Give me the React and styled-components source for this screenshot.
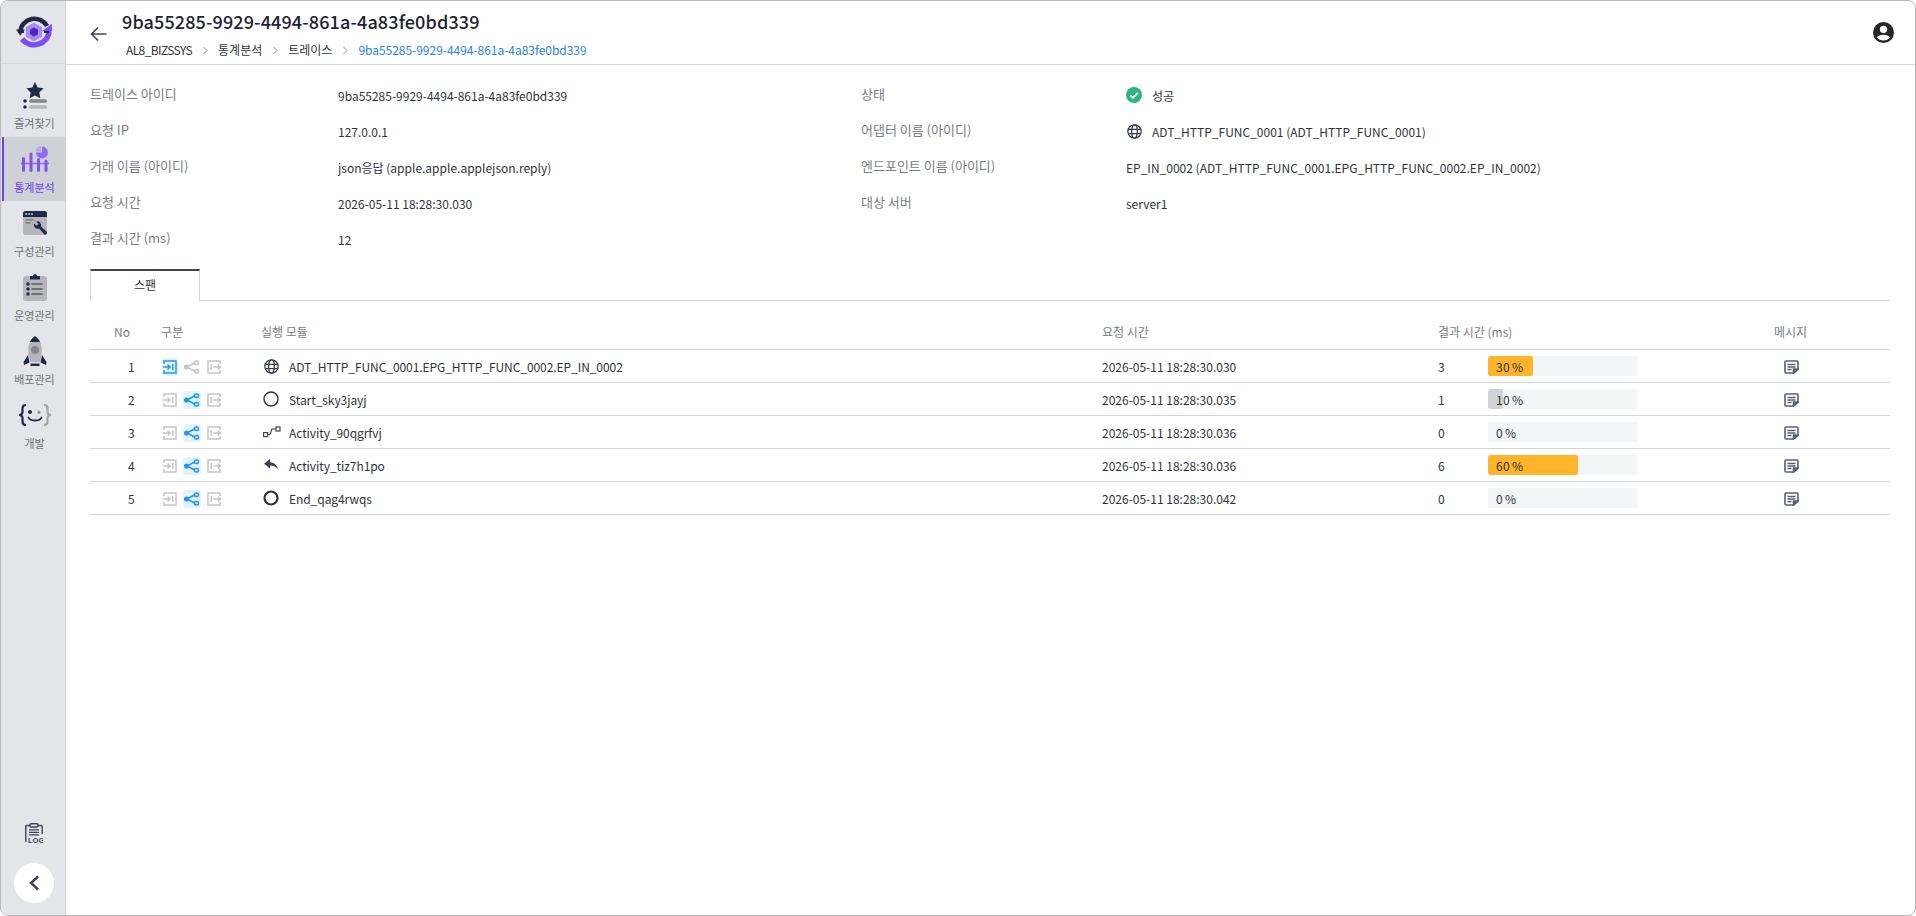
import React from "react";
import styled, { createGlobalStyle } from "styled-components";

const Global = createGlobalStyle`
  html, body { margin: 0; padding: 0; height: 100%; background: #fff; }
  body { font-family: "Noto Sans CJK KR", "Noto Sans", sans-serif; color: #2b2f38; }
  * { box-sizing: border-box; }
`;

const Frame = styled.div`
  width: 1916px; height: 916px; display: flex; overflow: hidden;
  border: 1px solid #b9b9bb; border-radius: 8px; background: #fff;
`;
const Sidebar = styled.nav`
  width: 65px; flex: none; background: #e4e5ea; display: flex; flex-direction: column;
  border-right: 1px solid #d3d4d8;
`;
const LogoBox = styled.div`
  height: 63px; flex: none; display: flex; align-items: center; justify-content: center;
  border-bottom: 1px solid #d3d4d8; margin-right: -1px;
`;
const NavList = styled.div`
  padding-top: 9px; display: flex; flex-direction: column; flex: 1;
`;
const NavItem = styled.div`
  height: 64px; display: flex; flex-direction: column; align-items: center;
  padding-top: 4px; font-size: 11px; line-height: 16px; margin-left: 1px;
  color: ${p => (p.$active ? "#6b3ff0" : "#6d7078")};
  background: ${p => (p.$active ? "#d0d1d6" : "transparent")};
  border-left: 2px solid ${p => (p.$active ? "#6b3ff0" : "transparent")};
`;
const NavIcon = styled.div`
  height: 36px; margin-bottom: 2px; flex: none; display: flex; align-items: center; justify-content: center;
`;
const SideBottom = styled.div`
  margin-top: auto; display: flex; flex-direction: column; align-items: center; padding: 0 0 12px 1px; gap: 19px;
`;
const CollapseBtn = styled.button`
  width: 40px; height: 40px; border-radius: 50%; border: 0; background: #fff; padding: 0;
  display: flex; align-items: center; justify-content: center;
`;
const Main = styled.main`
  flex: 1; min-width: 0; display: flex; flex-direction: column;
`;
const Header = styled.header`
  height: 64px; flex: none; border-bottom: 1px solid #d3d4d8; display: flex; align-items: center;
  padding: 0 21px 0 23px;
`;
const BackBtn = styled.div`
  width: 18px; height: 16px; display: flex; margin-right: 15px; margin-top: 2px;
`;
const TitleBlock = styled.div`
  flex: 1; display: flex; flex-direction: column; align-self: flex-start; padding-top: 7px;
`;
const Title = styled.h1`
  margin: 0; font-size: 18px; line-height: 26px; font-weight: 500; color: #1d2330; letter-spacing: .13px;
`;
const Crumbs = styled.div`
  display: flex; align-items: center; font-size: 12px; line-height: 18px; margin-top: 7px; padding-left: 4px; color: #2f333b;
`;
const CrumbRoot = styled.span`
  letter-spacing: -.6px;
`;
const CrumbSep = styled.span`
  display: flex; width: 26px; justify-content: center; color: #8a8d93;
`;
const CrumbCur = styled.span`
  color: #2684e8; letter-spacing: -.03px;
`;
const Content = styled.div`
  padding: 12px 25px 0 24px;
`;
const Info = styled.div`
  display: grid; grid-template-columns: 771px 1fr; height: 192px;
`;
const InfoCol = styled.div`
  display: flex; flex-direction: column;
`;
const InfoRow = styled.div`
  height: 36px; display: flex; align-items: center; font-size: 12px;
`;
const InfoLabel = styled.div`
  width: ${p => p.$w || 248}px; flex: none; color: #7a7d84; font-size: 13px; margin-top: -3px;
`;
const InfoValue = styled.div`
  display: flex; align-items: center; gap: 10px; color: #2f333b;
`;
const StatusIcon = styled.span`
  width: 16px; height: 16px; display: flex; align-items: center; justify-content: center;
`;
const Tabs = styled.div`
  display: flex; border-bottom: 1px solid #d3d4d8; height: 32px;
`;
const Tab = styled.div`
  width: 110px; height: 32px; background: #fff; border: 1px solid #d3d4d8; border-top: 2px solid #3e4656; border-bottom: 0;
  display: flex; align-items: center; justify-content: center; font-size: 12px; color: #2f333b; padding-bottom: 3px;
`;
const Table = styled.div`
  margin-top: 13px; display: flex; flex-direction: column;
`;
const Row = styled.div`
  display: grid; grid-template-columns: 71px 100px 841px 336px 336px 1fr; height: 33px; align-items: center;
  border-bottom: 1px solid #d3d4d8; font-size: 12px; color: #2f333b;
`;
const HeadRow = styled(Row)`
  height: 36px; color: #7a7d84;
`;
const NoHead = styled.div` padding-left: 24px; `;
const NoCell = styled.div` padding-left: 38px; `;
const TypeCell = styled.div`
  display: flex; align-items: center; margin: 1px 0 0 1px;
`;
const TypeIcon = styled.div`
  width: ${p => p.$w}px; height: 18px; display: flex; align-items: center; justify-content: center; border-radius: 3px;
  background: ${p => (p.$on ? "#e3f2fd" : "transparent")};
  margin-right: ${p => p.$mr || 0}px;
`;
const ModuleCell = styled.div`
  display: flex; align-items: center; gap: 8px; letter-spacing: -.07px;
`;
const ModIcon = styled.div`
  width: 20px; height: 18px; display: flex; align-items: center; justify-content: center;
`;
const ResultCell = styled.div`
  display: flex; align-items: center;
`;
const ResultNum = styled.div` width: 50px; `;
const Bar = styled.div`
  width: 150px; height: 20px; background: #f4f5f7; border-radius: 2px; position: relative;
  display: flex; align-items: center; padding-left: 8px; overflow: hidden;
`;
const BarFill = styled.div`
  position: absolute; left: 0; top: 0; bottom: 0; border-radius: 2px;
  background: ${p => p.$c};
`;
const BarText = styled.span`
  position: relative; letter-spacing: .3px; word-spacing: -1px;
`;
const MsgCell = styled.div`
  width: 34px; display: flex; justify-content: center; margin-top: 1px;
`;

const Star = () => (
  <svg width="24" height="27" viewBox="0 0 24 27">
    <path d="M12 0l2.700 5.400 5.900.9-4.300 4.100 1 5.800L12 13.400 6.700 16.200l1-5.800L3.400 6.300l5.900-.9z" fill="#1f2a44"/>
    <circle cx="2" cy="19" r="1.800" fill="#1f2a44"/>
    <rect x="6" y="17.200" width="18" height="3.600" rx="1.800" fill="#85878f"/>
    <circle cx="2" cy="25" r="1.800" fill="#1f2a44"/>
    <rect x="6" y="23.200" width="18" height="3.600" rx="1.800" fill="#b4b6bc"/>
  </svg>
);
const Stats = () => (
  <svg width="30" height="27" viewBox="0 0 30 27">
    <path d="M22 6.500h-6a6 6 0 1 0 6-6z" fill="#8f6cf5"/>
    <path d="M21 5.500V0a6 6 0 0 0-5.500 5.500z" fill="#b9a4fa"/>
    <path d="M1 17.500h28" stroke="#8f6cf5" strokeWidth="1.400"/>
    <g fill="#7c55f2">
      <rect x="2" y="11" width="3" height="15" rx="1.500"/>
      <rect x="9.500" y="6.500" width="3" height="19.500" rx="1.500"/>
      <rect x="17" y="12" width="3" height="14" rx="1.500"/>
      <rect x="24.500" y="13.500" width="3" height="12.500" rx="1.500"/>
    </g>
  </svg>
);
const Config = () => (
  <svg width="24" height="25" viewBox="0 0 24 25">
    <rect x="0" y="0" width="24" height="24" rx="2.500" fill="#b4b6bc"/>
    <path d="M0 2.500A2.500 2.500 0 0 1 2.500 0h19A2.500 2.500 0 0 1 24 2.500V6H0z" fill="#1f2a44"/>
    <circle cx="3" cy="3" r=".9" fill="#d9dade"/><circle cx="6" cy="3" r=".9" fill="#d9dade"/><circle cx="9" cy="3" r=".9" fill="#d9dade"/>
    <rect x="2.500" y="8" width="8" height="1.600" fill="#7d8089"/><rect x="2.500" y="11" width="5" height="1.600" fill="#7d8089"/>
    <path d="M11 12.500a4 4 0 0 0 5 5l5 5.500a1.700 1.700 0 0 0 2.500-2.400L18 15.500a4 4 0 0 0-5-5l2.500 2.300-1.800 2z" fill="#1f2a44"/>
  </svg>
);
const Ops = () => (
  <svg width="24" height="28" viewBox="0 0 24 28">
    <rect x="0" y="3" width="24" height="25" rx="3" fill="#b4b6bc"/>
    <path d="M7 3h3a2 2 0 0 1 4 0h3v3.500H7z" fill="#1f2a44"/>
    <g fill="#1f2a44"><circle cx="5" cy="11" r="1.700"/><circle cx="5" cy="16" r="1.700"/><circle cx="5" cy="21" r="1.700"/></g>
    <g fill="#6d7078"><rect x="8.500" y="10" width="11" height="2"/><rect x="8.500" y="15" width="11" height="2"/><rect x="8.500" y="20" width="11" height="2"/></g>
  </svg>
);
const Rocket = () => (
  <svg width="24" height="30" viewBox="0 0 24 30">
    <path d="M12 0C9.800 1.500 7.800 3.500 7 6h10C16.200 3.500 14.200 1.500 12 0z" fill="#1f2a44"/>
    <path d="M7 6h10c1.200 2.200 1.800 5 1.800 8 0 4-.8 8-1.800 12H7C6 22 5.200 18 5.200 14c0-3 .6-5.800 1.800-8z" fill="#b4b6bc"/>
    <circle cx="12" cy="14" r="4" fill="#85878f"/>
    <path d="M5 19L.5 26l.5 3 5.500-2.500zM19 19l4.500 7-.5 3-5.500-2.500z" fill="#1f2a44"/>
    <rect x="7.500" y="27.500" width="9" height="2.500" fill="#1f2a44"/>
  </svg>
);
const Dev = () => (
  <svg width="32" height="22" viewBox="0 0 32 22">
    <path d="M7 1C4 1 3.500 2.500 3.500 4.500v3.500c0 1.800-1 2.500-2.500 3 1.500.5 2.500 1.200 2.500 3v3.500c0 2 .5 3.500 3.500 3.500" fill="none" stroke="#1f2a44" strokeWidth="2.200"/>
    <path d="M25 1c3 0 3.500 1.500 3.500 3.500v3.500c0 1.800 1 2.500 2.500 3-1.500.5-2.500 1.200-2.500 3v3.500c0 2-.5 3.500-3.500 3.500" fill="none" stroke="#a3a5ab" strokeWidth="2.200"/>
    <circle cx="11" cy="8" r="2" fill="#1f2a44"/>
    <path d="M20 6l.7 1.400 1.500.2-1.100 1 .3 1.500-1.400-.7-1.400.7.300-1.500-1.100-1 1.500-.2z" fill="#85878f"/>
    <path d="M9.500 13.500c1.500 4 11.500 4 13 0" fill="none" stroke="#1f2a44" strokeWidth="1.800" strokeLinecap="round"/>
  </svg>
);
const Logo = () => (
  <svg width="36" height="32" viewBox="0 0 36 32">
    <path d="M4.500 15A14 13 0 0 1 31 10" fill="none" stroke="#1f2a44" strokeWidth="4.500"/>
    <path d="M0 13.500h9L4 19.500z" fill="#1f2a44" />
    <path d="M33 15A15 14.500 0 0 1 6 23" fill="none" stroke="#7c4df5" strokeWidth="5.500"/>
    <path d="M26 15h10l-.2-7z" fill="#7c4df5"/>
    <path d="M3 16h5M28 16h5" stroke="#1f2a44" strokeWidth="2"/>
    <path d="M18 6.500l8.200 4.700v9.600L18 25.500l-8.200-4.700v-9.600z" fill="#a98cf8"/>
    <path d="M18 11.500l3.900 2.300v4.500L18 20.500l-3.900-2.200v-4.500z" fill="#4a22c8"/>
  </svg>
);
const LogIcon = () => (
  <svg width="18" height="21" viewBox="0 0 18 21">
    <path d="M.8 19V3.500a1 1 0 0 1 1-1H5M13 2.500h3.200a1 1 0 0 1 1 1V11" fill="none" stroke="#3c4356" strokeWidth="1.400"/>
    <rect x="5" y=".7" width="8" height="3.300" rx="1" fill="none" stroke="#3c4356" strokeWidth="1.400"/>
    <path d="M4 6.800h10M4 9.300h10M4 11.800h10" stroke="#3c4356" strokeWidth="1.300"/>
    <text x="3" y="19.500" fontSize="7.500" fontWeight="700" fontFamily="Liberation Sans" fill="#3c4356">LOG</text>
  </svg>
);
const Chevron = () => (
  <svg width="12" height="18" viewBox="0 0 12 18"><path d="M10 2.500L3 9l7 6.500" fill="none" stroke="#3c4356" strokeWidth="2.400"/></svg>
);
const Back = () => (
  <svg width="18" height="16" viewBox="0 0 18 16"><path d="M17.500 8H2.500M9 1.500L2.500 8 9 14.500" fill="none" stroke="#3c4356" strokeWidth="1.600"/></svg>
);
const Sep = () => (
  <svg width="7" height="9" viewBox="0 0 7 9"><path d="M1.500 1l3.500 3.500L1.500 8" fill="none" stroke="#8a8d93" strokeWidth="1"/></svg>
);
const User = () => (
  <svg width="21" height="21" viewBox="2 2 20 20"><path fill="#25272c" d="M12 2a10 10 0 1 0 0 20 10 10 0 0 0 0-20zm0 3.500a3.500 3.500 0 1 1 0 7 3.500 3.500 0 0 1 0-7zm0 14.200a8 8 0 0 1-6.300-3.100c1-1.600 3.600-2.500 6.300-2.500s5.300.9 6.300 2.500a8 8 0 0 1-6.300 3.100z"/></svg>
);
const Check = () => (
  <svg width="16" height="16" viewBox="0 0 16 16"><circle cx="8" cy="8" r="8" fill="#2fb380"/><path d="M4.200 8.200l2.700 2.600 4.900-5" fill="none" stroke="#fff" strokeWidth="1.800"/></svg>
);
const Globe = ({ s = 15 }) => (
  <svg width={s} height={s} viewBox="0 0 14 14" fill="none" stroke="#363c4d" strokeWidth="1.200">
    <circle cx="7" cy="7" r="6.200"/><ellipse cx="7" cy="7" rx="2.700" ry="6.200"/><path d="M1.200 5h11.600M1.200 9h11.600"/>
  </svg>
);
const Inbound = ({ c }) => (
  <svg width="14" height="14" viewBox="0 0 14 14" fill="none" stroke={c} strokeWidth="1.500">
    <path d="M1 4V1h12v12H1v-3"/>
    <path d="M0 7h7M4.500 4.500L7 7l-2.500 2.500"/><path d="M9.800 4v6"/>
  </svg>
);
const Share = ({ c }) => (
  <svg width="16" height="14" viewBox="0 0 16 14" fill="none" stroke={c} strokeWidth="1.500">
    <circle cx="2.500" cy="7" r="1.800" fill={c}/><rect x="10.500" y="1" width="4" height="3.400" rx="1.500"/><rect x="10.500" y="9.600" width="4" height="3.400" rx="1.500"/>
    <path d="M4 6.500L10.500 3M4 7.500l6.500 3.500"/>
  </svg>
);
const Outbound = ({ c }) => (
  <svg width="14" height="14" viewBox="0 0 14 14" fill="none" stroke={c} strokeWidth="1.500">
    <path d="M13 4V1H1v12h12v-3"/>
    <path d="M4.200 4v6M6.500 7H14M11 4.500L13.500 7 11 9.500"/>
  </svg>
);
const Ring = ({ w = 1.400, r = 7 }) => (
  <svg width="16" height="16" viewBox="0 0 16 16"><circle cx="8" cy="8" r={r} fill="none" stroke="#2f333b" strokeWidth={w}/></svg>
);
const Activity = () => (
  <svg width="18" height="12" viewBox="0 0 18 12" fill="none" stroke="#3c4356" strokeWidth="1.200" style={{ marginLeft: 2 }}>
    <rect x=".6" y="6.600" width="4" height="4"/><rect x="13" y="1" width="4" height="4"/><path d="M4.600 8.500H7l2-5.500h4"/>
  </svg>
);
const Reply = () => (
  <svg width="14" height="12" viewBox="0 0 14 12"><path d="M6 0L0 4.800 6 9.600V6.600c3.500 0 6 1 8 4-.6-4.500-3.400-7-8-7.400z" fill="#3c4356"/></svg>
);
const Note = () => (
  <svg width="15" height="14" viewBox="0 0 15 14" fill="none" stroke="#5a6072" strokeWidth="1.600">
    <path d="M9.500 13H2a1 1 0 0 1-1-1V2a1 1 0 0 1 1-1h11a1 1 0 0 1 1 1v7z"/>
    <path d="M3.500 4.500h8M3.500 7h8M3.500 9.500h4"/>
    <path d="M9.500 13V9H14z" fill="#5a6072"/>
  </svg>
);

const rows = [
  { n: 1, on: 0, icon: <Globe />, name: "ADT_HTTP_FUNC_0001.EPG_HTTP_FUNC_0002.EP_IN_0002", t: "2026-05-11 18:28:30.030", v: 3, p: 30, c: "#ffb429" },
  { n: 2, on: 1, icon: <Ring />, name: "Start_sky3jayj", t: "2026-05-11 18:28:30.035", v: 1, p: 10, c: "#d0d2d7" },
  { n: 3, on: 1, icon: <Activity />, name: "Activity_90qgrfvj", t: "2026-05-11 18:28:30.036", v: 0, p: 0, c: "#d0d2d7" },
  { n: 4, on: 1, icon: <Reply />, name: "Activity_tiz7h1po", t: "2026-05-11 18:28:30.036", v: 6, p: 60, c: "#ffb429" },
  { n: 5, on: 1, icon: <Ring w={2.200} r={6.500} />, name: "End_qag4rwqs", t: "2026-05-11 18:28:30.042", v: 0, p: 0, c: "#d0d2d7" },
];
const OFF = "#c3c5ca";
const BLUE = "#2196f3";
const id = "9ba55285-9929-4494-861a-4a83fe0bd339";

const nav = [
  { l: "즐겨찾기", i: <Star /> },
  { l: "통계분석", i: <Stats />, a: true },
  { l: "구성관리", i: <Config /> },
  { l: "운영관리", i: <Ops /> },
  { l: "배포관리", i: <Rocket /> },
  { l: "개발", i: <Dev /> },
];

export default function App() {
  return (
    <Frame>
      <Global />
      <Sidebar>
        <LogoBox><Logo /></LogoBox>
        <NavList>
          {nav.map(n => (
            <NavItem key={n.l} $active={n.a}><NavIcon>{n.i}</NavIcon>{n.l}</NavItem>
          ))}
        </NavList>
        <SideBottom>
          <LogIcon />
          <CollapseBtn><Chevron /></CollapseBtn>
        </SideBottom>
      </Sidebar>
      <Main>
        <Header>
          <BackBtn><Back /></BackBtn>
          <TitleBlock>
            <Title>{id}</Title>
            <Crumbs>
              <CrumbRoot>AL8_BIZSSYS</CrumbRoot><CrumbSep><Sep /></CrumbSep>
              <span>통계분석</span><CrumbSep><Sep /></CrumbSep>
              <span>트레이스</span><CrumbSep><Sep /></CrumbSep>
              <CrumbCur>{id}</CrumbCur>
            </Crumbs>
          </TitleBlock>
          <User />
        </Header>
        <Content>
          <Info>
            <InfoCol>
              <InfoRow><InfoLabel>트레이스 아이디</InfoLabel><InfoValue>{id}</InfoValue></InfoRow>
              <InfoRow><InfoLabel>요청 IP</InfoLabel><InfoValue>127.0.0.1</InfoValue></InfoRow>
              <InfoRow><InfoLabel>거래 이름 (아이디)</InfoLabel><InfoValue>json응답 (apple.apple.applejson.reply)</InfoValue></InfoRow>
              <InfoRow><InfoLabel>요청 시간</InfoLabel><InfoValue>2026-05-11 18:28:30.030</InfoValue></InfoRow>
              <InfoRow><InfoLabel>결과 시간 (ms)</InfoLabel><InfoValue>12</InfoValue></InfoRow>
            </InfoCol>
            <InfoCol>
              <InfoRow><InfoLabel $w={265}>상태</InfoLabel><InfoValue><StatusIcon><Check /></StatusIcon>성공</InfoValue></InfoRow>
              <InfoRow><InfoLabel $w={265}>어댑터 이름 (아이디)</InfoLabel><InfoValue><StatusIcon><Globe /></StatusIcon>ADT_HTTP_FUNC_0001 (ADT_HTTP_FUNC_0001)</InfoValue></InfoRow>
              <InfoRow><InfoLabel $w={265}>엔드포인트 이름 (아이디)</InfoLabel><InfoValue>EP_IN_0002 (ADT_HTTP_FUNC_0001.EPG_HTTP_FUNC_0002.EP_IN_0002)</InfoValue></InfoRow>
              <InfoRow><InfoLabel $w={265}>대상 서버</InfoLabel><InfoValue>server1</InfoValue></InfoRow>
            </InfoCol>
          </Info>
          <Tabs><Tab>스팬</Tab></Tabs>
          <Table>
            <HeadRow>
              <NoHead>No</NoHead><div>구분</div><div>실행 모듈</div><div>요청 시간</div><div>결과 시간 (ms)</div><div>메시지</div>
            </HeadRow>
            {rows.map(r => (
              <Row key={r.n}>
                <NoCell>{r.n}</NoCell>
                <TypeCell>
                  <TypeIcon $w={16} $on={!r.on} $mr={5}><Inbound c={r.on ? OFF : BLUE} /></TypeIcon>
                  <TypeIcon $w={18} $on={!!r.on} $mr={6}><Share c={r.on ? BLUE : OFF} /></TypeIcon>
                  <TypeIcon $w={14}><Outbound c={OFF} /></TypeIcon>
                </TypeCell>
                <ModuleCell><ModIcon>{r.icon}</ModIcon>{r.name}</ModuleCell>
                <div>{r.t}</div>
                <ResultCell>
                  <ResultNum>{r.v}</ResultNum>
                  <Bar>
                    <BarFill $c={r.c} style={{ width: `${r.p}%` }} />
                    <BarText>{r.p} %</BarText>
                  </Bar>
                </ResultCell>
                <MsgCell><Note /></MsgCell>
              </Row>
            ))}
          </Table>
        </Content>
      </Main>
    </Frame>
  );
}
